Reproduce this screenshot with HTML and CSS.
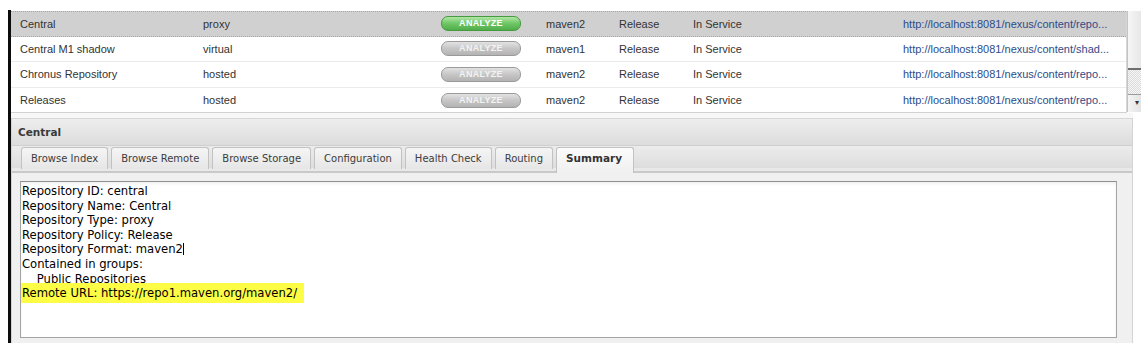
FILE: index.html
```html
<!DOCTYPE html>
<html lang="en">

<head>
    <meta charset="UTF-8">
    <meta name="viewport" content="width=device-width, initial-scale=1.0">
    <title>Repositories</title>
    <link rel="stylesheet" href="styles.css">
</head>

<body>

    <div class="app">

        <!-- repository list -->
        <div class="grid">
            <div class="grid-body">
                <div class="row selected">
                    <div>Central</div>
                    <div>proxy</div>
                    <div><span class="analyze on">ANALYZE</span></div>
                    <div>maven2</div>
                    <div>Release</div>
                    <div>In Service</div>
                    <div class="url">http://localhost:8081/nexus/content/repo...</div>
                </div>
                <div class="row">
                    <div>Central M1 shadow</div>
                    <div>virtual</div>
                    <div><span class="analyze">ANALYZE</span></div>
                    <div>maven1</div>
                    <div>Release</div>
                    <div>In Service</div>
                    <div class="url">http://localhost:8081/nexus/content/shad...</div>
                </div>
                <div class="row">
                    <div>Chronus Repository</div>
                    <div>hosted</div>
                    <div><span class="analyze">ANALYZE</span></div>
                    <div>maven2</div>
                    <div>Release</div>
                    <div>In Service</div>
                    <div class="url">http://localhost:8081/nexus/content/repo...</div>
                </div>
                <div class="row">
                    <div>Releases</div>
                    <div>hosted</div>
                    <div><span class="analyze">ANALYZE</span></div>
                    <div>maven2</div>
                    <div>Release</div>
                    <div>In Service</div>
                    <div class="url">http://localhost:8081/nexus/content/repo...</div>
                </div>
            </div>
            <div class="vscroll">
                <div class="thumb"></div>
                <div class="track"></div>
                <div class="arrow">&#9662;</div>
            </div>
        </div>

        <div class="split"></div>

        <!-- detail panel -->
        <div class="panel">
            <div class="panel-header">Central</div>
            <ul class="tabs">
                <li class="tab">Browse Index</li>
                <li class="tab">Browse Remote</li>
                <li class="tab">Browse Storage</li>
                <li class="tab">Configuration</li>
                <li class="tab">Health Check</li>
                <li class="tab">Routing</li>
                <li class="tab active">Summary</li>
            </ul>
            <div class="panel-body">
                <div class="summary">Repository ID: central
Repository Name: Central
Repository Type: proxy
Repository Policy: Release
Repository Format: maven2<span class="caret"></span>
Contained in groups:
    Public Repositories
<span class="mark">Remote URL: https://repo1.maven.org/maven2/</span></div>
            </div>
        </div>

    </div>

</body>

</html>
```

FILE: styles.css
```css
* {
    padding: 0;
    margin: 0;
    list-style: none;
}

body {
    background-color: #fff;
    font-family: "Liberation Sans", Arial, sans-serif;
    overflow: hidden;
}

.app {
    margin: 10px 0 0 8px;
    padding-top: 1px;
    height: 332px;
    border-left: 3px solid #0c0c0c;
}

/* 表格 */
.grid {
    display: flex;
    width: 1135px;
}

.grid-body {
    width: 1115px;
    height: 101px;
    overflow: hidden;
    border-bottom: 1px solid #d2d2d2;
    border-right: 1px solid #d6d6d6;
}

.row {
    display: grid;
    grid-template-columns: 183px 238px 105px 73px 74px 210px 1fr;
    align-items: center;
    height: 25.6px;
    padding-left: 9px;
    box-sizing: border-box;
    border-bottom: 1px solid #ececec;
    font-size: 11px;
    color: #333;
    white-space: nowrap;
}

.row.selected {
    background-color: #d0d0d0;
    border-top: 1px dotted #a6a6a6;
    border-bottom: 1px dotted #a6a6a6;
}

.row .url {
    color: #2d4c8a;
}

.analyze {
    display: block;
    width: 80px;
    height: 15px;
    box-sizing: border-box;
    border: 1px solid #9a9a9a;
    border-radius: 7px;
    background: linear-gradient(#e2e2e2, #c6c6c6 50%, #b3b3b3);
    color: #f3f3f3;
    font-size: 9px;
    font-weight: bold;
    letter-spacing: 0.3px;
    line-height: 13px;
    text-align: center;
}

.analyze.on {
    border-color: #45993f;
    background: linear-gradient(#b2e6a6, #6fc666 50%, #50ad4a);
    color: #fff;
}

/* 滚动条 */
.vscroll {
    display: flex;
    flex-direction: column;
    width: 17px;
    height: 101px;
    border-left: 1px solid #c4c4c4;
}

.vscroll .thumb {
    height: 57px;
    background: linear-gradient(90deg, #f6f6f6, #e2e2e2);
    border-bottom: 2px solid #6e6e6e;
}

.vscroll .track {
    flex: 1;
    background: repeating-conic-gradient(#dadada 0 25%, #f7f7f7 0 50%) 0 0 / 2px 2px;
}

.vscroll .arrow {
    height: 17px;
    background: linear-gradient(90deg, #f4f4f4, #dedede);
    border-top: 1px solid #9c9c9c;
    font-size: 8px;
    line-height: 16px;
    text-align: center;
    color: #333;
}

.split {
    height: 5px;
    width: 1122px;
    background-color: #f7f7f7;
}

/* 详情面板 */
.panel {
    width: 1122px;
    box-sizing: border-box;
    border-left: 1px solid #d4d4d4;
    border-right: 1px solid #d4d4d4;
    font-family: "DejaVu Sans", Verdana, sans-serif;
    color: #333;
}

.panel-header {
    height: 26px;
    padding-left: 6px;
    border-top: 1px solid #d6d6d6;
    background: linear-gradient(#eeeeee, #dcdcdc);
    font-size: 10.5px;
    font-weight: bold;
    line-height: 27px;
    color: #3a3a3a;
}

.tabs {
    display: flex;
    align-items: flex-end;
    gap: 3px;
    height: 28px;
    padding-left: 9px;
    box-sizing: border-box;
    border-top: 1px solid #cfcfcf;
    background: linear-gradient(#ececec, #dddddd 22px, #e9e9e9 22px, #e9e9e9 25px, #c9c9c9 25px);
}

.tab {
    height: 21px;
    margin-bottom: 4px;
    padding: 0 9px;
    border: 1px solid #c2c2c2;
    border-bottom: none;
    border-radius: 3px 3px 0 0;
    background: linear-gradient(#f5f5f5, #e6e6e6);
    font-size: 10px;
    line-height: 21px;
    color: #3c3c3c;
}

.tab.active {
    height: 25px;
    margin-bottom: 0;
    padding-right: 11px;
    background: linear-gradient(#fbfbfb, #f0f0f0);
    font-size: 10.5px;
    font-weight: bold;
    color: #333;
}

.panel-body {
    height: 170px;
    padding: 8px 15px 5px 8px;
    box-sizing: border-box;
    background-color: #f0f0f0;
}

.summary {
    height: 157px;
    padding: 2px 1px 1px;
    box-sizing: border-box;
    border: 1px solid #a4a4a4;
    border-top-color: #8f8f8f;
    background-color: #fff;
    box-shadow: inset 0 2px 3px rgba(0, 0, 0, 0.06);
    font-size: 11.6px;
    line-height: 14.6px;
    color: #000;
    white-space: pre;
}

.caret {
    display: inline-block;
    width: 1px;
    height: 12px;
    vertical-align: -2px;
    background-color: #000;
}

.mark {
    margin-left: -1px;
    padding: 3px 7px 3px 1px;
    background-color: #fdfd45;
}
```
